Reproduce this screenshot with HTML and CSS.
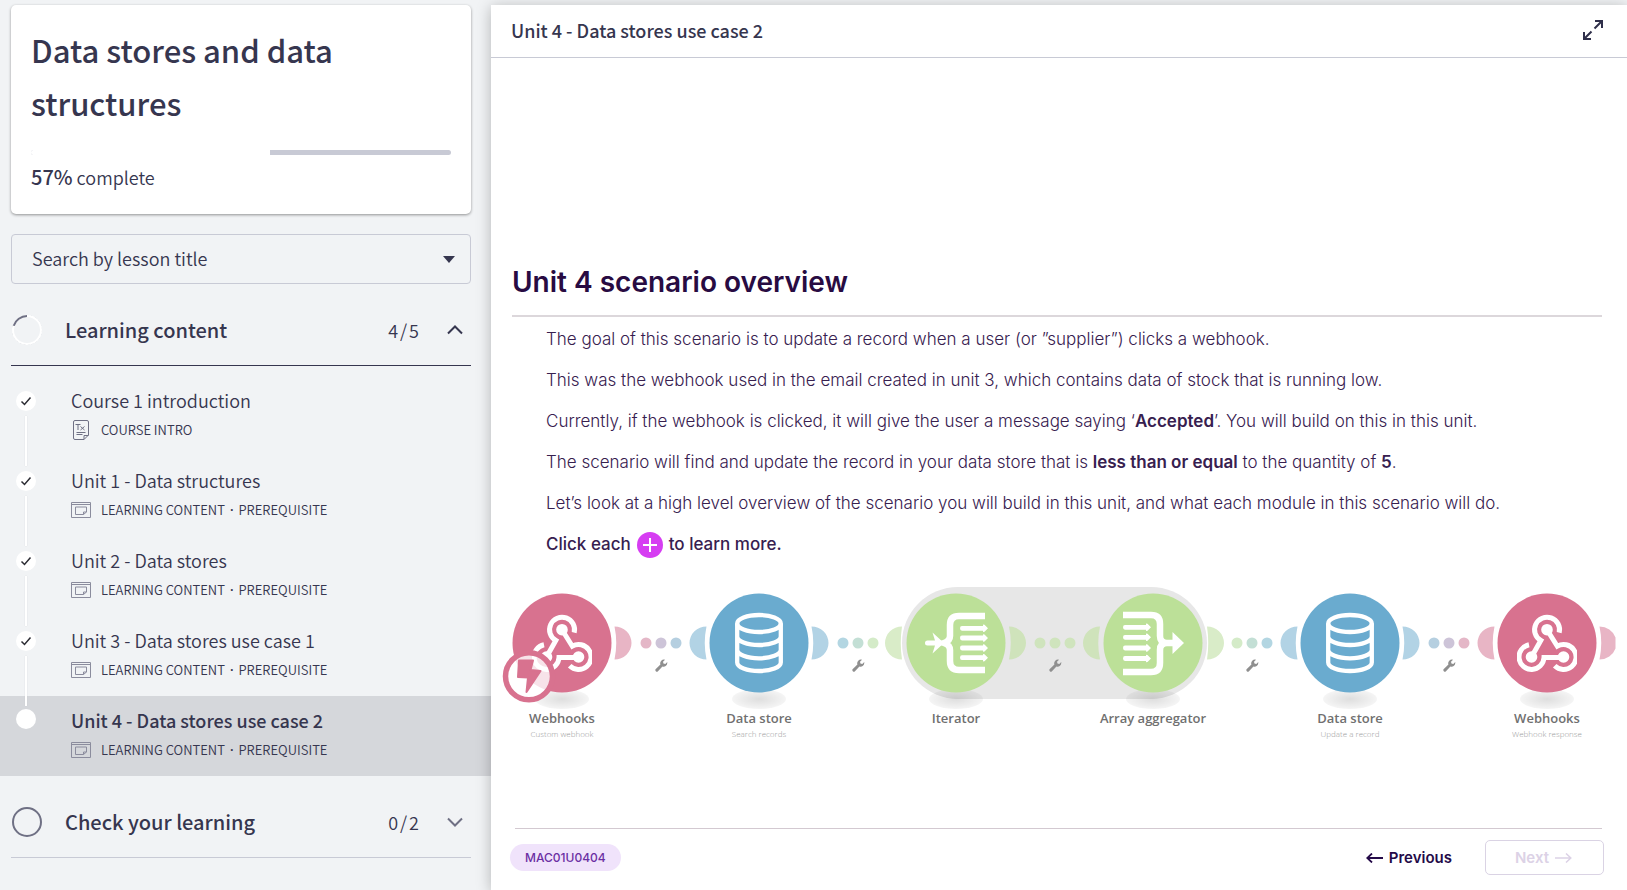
FILE: index.html
```html
<!DOCTYPE html>
<html lang="en">
<head>
<meta charset="utf-8">
<meta name="viewport" content="width=device-width, initial-scale=1">
<title>Data stores and data structures</title>
<link rel="stylesheet" href="styles.css">
</head>
<body>
<svg class="defs" aria-hidden="true">
  <defs>
    <radialGradient id="shade"><stop offset="0" stop-color="#000" stop-opacity=".13"/><stop offset="1" stop-color="#000" stop-opacity=".04"/></radialGradient>
    <symbol id="check" viewBox="0 0 20 20"><circle cx="10" cy="10" r="10" fill="#fff"/><path d="M5.500 10.500l3 3 6-7" fill="none" stroke="#2b2b33" stroke-width="1.500"/></symbol>
    <symbol id="lesson" viewBox="0 0 20 16"><g fill="none" stroke="#8b8c9d"><path d="M.5.500h19v15H.5zM.5 2.500h19"/><path d="M4.500 5h11v5l-3 2.500h-8zM12.500 12.500V10h3"/></g></symbol>
    <symbol id="webhook" viewBox="-30 -30 60 60"><g fill="none" stroke="#fff" stroke-width="5"><path d="M-15.500 14L-6.200-2.500A12.500 12.500 0 1 1 12.200-10.300"/><path d="M16.500 14.500H-3A12.500 12.500 0 1 1-18 1.700"/><path d="M0-13.300L10.300 3.200A12.500 12.500 0 1 1 7.700 22.800"/></g><g fill="#fff"><circle cy="-13.300" r="5.800"/><circle cx="-15.500" cy="14" r="5.800"/><circle cx="16.500" cy="14" r="5.800"/></g></symbol>
    <symbol id="database" viewBox="-30 -32 60 64"><g fill="none" stroke="#fff" stroke-width="4.300"><ellipse cy="-19.500" rx="21.800" ry="8.500"/><path d="M-21.800-19.500V19.500A21.800 8.500 0 0 0 21.800 19.500V-19.500M-21.800-6.500A21.800 8.500 0 0 0 21.800-6.500M-21.800 6.800A21.800 8.500 0 0 0 21.800 6.800"/></g></symbol>
    <symbol id="arrow" viewBox="0 0 28 10"><path d="M2 2.600H23V1.200L24.500 1.500 28 5 24.500 8.500 23 8.800V7.400H2Q0 7.400 0 5T2 2.600z" fill="#fff"/></symbol>
    <symbol id="wrench" viewBox="0 0 24 24"><path fill="#8f8f8f" d="M22.700 7.500a7 7 0 0 1-9 6.500L5.500 22.500a2.800 2.800 0 0 1-4-4L10 10.300a7 7 0 0 1 8.500-9L14.800 5l.8 3.400 3.400.8 3.600-3.700z"/></symbol>
  </defs>
</svg>
<div class="app">
  <aside class="sidebar">
    <section class="card">
      <h1>Data stores and data structures</h1>
      <div class="bar" role="progressbar" aria-label="Course progress" aria-valuenow="57" aria-valuemin="0" aria-valuemax="100"><div class="bar-done" style="width:57%"></div></div>
      <p class="percent"><strong>57%</strong> complete</p>
    </section>
    <div class="search">
      <select aria-label="Search by lesson title"><option>Search by lesson title</option></select>
      <svg class="caret" viewBox="0 0 12 7" aria-hidden="true"><path d="M0 0h12L6 7z" fill="#36364f"/></svg>
    </div>
    <nav aria-label="Lessons">
      <button class="section open" aria-expanded="true">
        <svg class="ring" viewBox="0 0 30 30" aria-hidden="true"><circle cx="15" cy="15" r="14.500" fill="none" stroke="#c9cad3" stroke-dasharray="2 2"/><circle cx="15" cy="15" r="14" fill="none" stroke="#fff" stroke-width="2"/><path d="M1.700 10.700A14 14 0 0 1 15 1" fill="none" stroke="#6f7084" stroke-width="2"/></svg>
        <span class="section-name">Learning content</span>
        <span class="count"><span>4</span><span>/</span><span>5</span></span>
        <svg class="chevron" viewBox="0 0 16 10" aria-hidden="true"><path d="M1 8.500l7-7 7 7" fill="none" stroke="#36364f" stroke-width="2"/></svg>
      </button>
      <ul class="lessons">
        <li><a class="lesson" href="#l0"><span class="track"><svg class="dot"><use href="#check"/></svg><i class="line"></i></span><span class="info"><span class="name">Course 1 introduction</span><span class="meta"><svg class="kind" viewBox="0 0 20 20"><g fill="none" stroke="#6f7084"><path d="M4 .5h12q1.500 0 1.500 1.500v13l-4.500 4.500H4q-1.500 0-1.500-1.500V2Q2.500.5 4 .5zM13 19.500V15.500h4.500M5.500 12.500h9M5.500 14.500h6"/><path d="M4.500 4.500h5M7 4.500V10M9.500 6.500l4 3.500M13.500 6.500l-4 3.500"/></g></svg><span>COURSE INTRO</span></span></span></a></li>
        <li><a class="lesson" href="#l1"><span class="track"><svg class="dot"><use href="#check"/></svg><i class="line"></i></span><span class="info"><span class="name">Unit 1 - Data structures</span><span class="meta"><svg class="kind"><use href="#lesson"/></svg><span>LEARNING CONTENT</span><b>·</b><span>PREREQUISITE</span></span></span></a></li>
        <li><a class="lesson" href="#l2"><span class="track"><svg class="dot"><use href="#check"/></svg><i class="line"></i></span><span class="info"><span class="name">Unit 2 - Data stores</span><span class="meta"><svg class="kind"><use href="#lesson"/></svg><span>LEARNING CONTENT</span><b>·</b><span>PREREQUISITE</span></span></span></a></li>
        <li><a class="lesson" href="#l3"><span class="track"><svg class="dot"><use href="#check"/></svg><i class="line"></i></span><span class="info"><span class="name">Unit 3 - Data stores use case 1</span><span class="meta"><svg class="kind"><use href="#lesson"/></svg><span>LEARNING CONTENT</span><b>·</b><span>PREREQUISITE</span></span></span></a></li>
        <li><a class="lesson current" href="#l4" aria-current="page"><span class="track"><i class="dot empty"></i></span><span class="info"><span class="name">Unit 4 - Data stores use case 2</span><span class="meta"><svg class="kind"><use href="#lesson"/></svg><span>LEARNING CONTENT</span><b>·</b><span>PREREQUISITE</span></span></span></a></li>
      </ul>
      <button class="section" aria-expanded="false">
        <svg class="ring" viewBox="0 0 30 30" aria-hidden="true"><circle cx="15" cy="15" r="14" fill="none" stroke="#6f7084" stroke-width="2"/></svg>
        <span class="section-name">Check your learning</span>
        <span class="count"><span>0</span><span>/</span><span>2</span></span>
        <svg class="chevron" viewBox="0 0 16 10" aria-hidden="true"><path d="M1 1.500l7 7 7-7" fill="none" stroke="#6f7084" stroke-width="2"/></svg>
      </button>
    </nav>
  </aside>
  <main class="main">
    <header class="topbar">
      <h2>Unit 4 - Data stores use case 2</h2>
      <button class="expand" aria-label="Full screen"><svg viewBox="0 0 20 20"><g fill="none" stroke="#2f2f4a" stroke-width="2"><path d="M12 1h7v7M19 1l-7.500 7.500M8 19H1v-7M1 19l7.500-7.500"/></g></svg></button>
    </header>
    <article class="stage">
      <h3>Unit 4 scenario overview</h3>
      <div class="copy">
        <p>The goal of this scenario is to update a record when a user (or ”supplier”) clicks a webhook.</p>
        <p>This was the webhook used in the email created in unit 3, which contains data of stock that is running low.</p>
        <p>Currently, if the webhook is clicked, it will give the user a message saying ‘<strong>Accepted</strong>’. You will build on this in this unit.</p>
        <p>The scenario will find and update the record in your data store that is <strong>less than or equal</strong> to the quantity of <strong>5</strong>.</p>
        <p>Let’s look at a high level overview of the scenario you will build in this unit, and what each module in this scenario will do.</p>
        <p class="hint"><span>Click each</span><svg class="plus" viewBox="0 0 26 26" role="img" aria-label="plus"><circle cx="13" cy="13" r="13" fill="#d63df2"/><path d="M13 6v14M6 13h14" stroke="#fff" stroke-width="2"/></svg><span>to learn more.</span></p>
      </div>
      <div class="flow">
        <div class="module pink">
          <svg class="art" viewBox="-60 -56 120 124"><ellipse cx="0" cy="56" rx="27" ry="10" fill="url(#shade)"/><circle class="disc" r="49.500"/><path class="lobe" d="M52.500-16.500a17 16.500 0 0 1 0 33q3.500-16.500 0-33z"/><use href="#webhook" x="-30" y="-30" width="60" height="60"/><circle cx="-33" cy="33.300" r="23.500" fill="#fff" fill-opacity=".8" stroke="#d8728f" stroke-width="5.500"/><path d="M-43 17.500h14l-2.500 9.500 10 1-14 21 1.500-14.500-10-.5z" fill="#d8728f" stroke="#d8728f" stroke-width="2" stroke-linejoin="round"/></svg>
          <strong>Webhooks</strong><small>Custom webhook</small>
        </div>
        <div class="link"><svg viewBox="-38 -56 76 124"><circle cx="-15" r="5.500" fill="#e4b7c7"/><circle r="5.500" fill="#cdc4d8"/><circle cx="15" r="5.500" fill="#b5cfe0"/><use href="#wrench" x="-6" y="16" width="13" height="13"/></svg></div>
        <div class="module blue">
          <svg class="art" viewBox="-60 -56 120 124"><ellipse cx="0" cy="56" rx="27" ry="10" fill="url(#shade)"/><circle class="disc" r="49.500"/><path class="lobe" d="M52.500-16.500a17 16.500 0 0 1 0 33q3.500-16.500 0-33zM-52.500-16.500a17 16.500 0 0 0 0 33q-3.500-16.500 0-33z"/><use href="#database" x="-30" y="-32" width="60" height="64"/></svg>
          <strong>Data store</strong><small>Search records</small>
        </div>
        <div class="link"><svg viewBox="-38 -56 76 124"><circle cx="-15" r="5.500" fill="#b3d6e2"/><circle r="5.500" fill="#c3dfd5"/><circle cx="15" r="5.500" fill="#d4ebc8"/><use href="#wrench" x="-6" y="16" width="13" height="13"/></svg></div>
        <div class="group">
          <div class="module green">
            <svg class="art" viewBox="-60 -56 120 124"><ellipse cx="0" cy="56" rx="27" ry="10" fill="url(#shade)"/><path d="M-54-16.500a17 16.500 0 0 0 0 33q-2.500-16.500 0-33z" fill="#d9ecc8"/><path d="M53-16.500a17 16.500 0 0 1 0 33q3.500-16.500 0-33z" fill="#cfe3bb"/><circle class="disc" r="49.500"/><path d="M29-27H3q-9 0-9 9v11q0 5-6 7q6 2 6 7v11q0 9 9 9H29" fill="none" stroke="#fff" stroke-width="6.500"/><path d="M-28.500-2.500h7.500l-2.500-8L-12 0l-11.500 10.500 2.500-8h-7.500q-2.500 0-2.500-2.500t2.500-2.500z" fill="#fff"/><use href="#arrow" x="4" y="-19.700" width="28" height="10"/><use href="#arrow" x="4" y="-10" width="28" height="10"/><use href="#arrow" x="4" y="0" width="28" height="10"/><use href="#arrow" x="4" y="9.700" width="28" height="10"/></svg>
            <strong>Iterator</strong>
          </div>
          <div class="link"><svg viewBox="-38 -56 76 124"><g fill="#cfe4bd"><circle cx="-15" r="5.500"/><circle r="5.500"/><circle cx="15" r="5.500"/></g><use href="#wrench" x="-6" y="16" width="13" height="13"/></svg></div>
          <div class="module green">
            <svg class="art" viewBox="-60 -56 120 124"><ellipse cx="0" cy="56" rx="27" ry="10" fill="url(#shade)"/><path d="M-53-16.500a17 16.500 0 0 0 0 33q-3.500-16.500 0-33z" fill="#cfe3bb"/><path d="M54-16.500a17 16.500 0 0 1 0 33q2.500-16.500 0-33z" fill="#d9ecc8"/><circle class="disc" r="49.500"/><path d="M-30-28H-2q9 0 9 9v12q0 7 7 7h9M-30 29H-2q9 0 9-9v-13q0-7 7-7" fill="none" stroke="#fff" stroke-width="6.500"/><path d="M19.500-11L31 0 19.500 11z" fill="#fff"/><use href="#arrow" x="-30" y="-20.700" width="28" height="10"/><use href="#arrow" x="-30" y="-10.700" width="28" height="10"/><use href="#arrow" x="-30" y="0" width="28" height="10"/><use href="#arrow" x="-30" y="10.500" width="28" height="10"/></svg>
            <strong>Array aggregator</strong>
          </div>
        </div>
        <div class="link"><svg viewBox="-38 -56 76 124"><circle cx="-15" r="5.500" fill="#d4ebc8"/><circle r="5.500" fill="#c3dfd5"/><circle cx="15" r="5.500" fill="#b3d6e2"/><use href="#wrench" x="-6" y="16" width="13" height="13"/></svg></div>
        <div class="module blue">
          <svg class="art" viewBox="-60 -56 120 124"><ellipse cx="0" cy="56" rx="27" ry="10" fill="url(#shade)"/><circle class="disc" r="49.500"/><path class="lobe" d="M52.500-16.500a17 16.500 0 0 1 0 33q3.500-16.500 0-33zM-52.500-16.500a17 16.500 0 0 0 0 33q-3.500-16.500 0-33z"/><use href="#database" x="-30" y="-32" width="60" height="64"/></svg>
          <strong>Data store</strong><small>Update a record</small>
        </div>
        <div class="link"><svg viewBox="-38 -56 76 124"><circle cx="-15" r="5.500" fill="#b5cfe0"/><circle r="5.500" fill="#cdc4d8"/><circle cx="15" r="5.500" fill="#e4b7c7"/><use href="#wrench" x="-6" y="16" width="13" height="13"/></svg></div>
        <div class="module pink">
          <svg class="art" viewBox="-60 -56 120 124"><ellipse cx="0" cy="56" rx="27" ry="10" fill="url(#shade)"/><circle class="disc" r="49.500"/><path class="lobe" d="M52.500-16.500a17 16.500 0 0 1 16 11v11a17 16.500 0 0 1-16 11q3.500-16.500 0-33zM-52.500-16.500a17 16.500 0 0 0 0 33q-3.500-16.500 0-33z"/><use href="#webhook" x="-30" y="-30" width="60" height="60"/></svg>
          <strong>Webhooks</strong><small>Webhook response</small>
        </div>
      </div>
    </article>
    <footer class="footer">
      <span class="code">MAC01U0404</span>
      <div class="pager">
        <button class="prev"><svg viewBox="0 0 17 10" aria-hidden="true"><path d="M6 0.500L1.200 5 6 9.500M1.200 5H17" fill="none" stroke="#240a48" stroke-width="1.800"/></svg>Previous</button>
        <button class="next" disabled>Next<svg viewBox="0 0 17 10" aria-hidden="true"><path d="M11 .5L15.800 5 11 9.500M15.800 5H0" fill="none" stroke="#dcd2e6" stroke-width="1.500"/></svg></button>
      </div>
    </footer>
  </main>
</div>
</body>
</html>
```
FILE: styles.css
```css
*, *::before { box-sizing: border-box; }
body {
  margin: 0;
  background: #f1f3f5;
  color: #36364f;
  font: 350 18px/30px "Noto Sans CJK SC", "Noto Sans", sans-serif;
}
h1, h2, h3, p, ul { margin: 0; padding: 0; }
button { margin: 0; border: 0; background: none; color: inherit; font: inherit; cursor: pointer; }
a { color: inherit; text-decoration: none; }
svg { display: block; flex: none; }
.defs { position: absolute; width: 0; height: 0; }

.app { display: flex; min-height: 100vh; padding-top: 5px; }

/* Sidebar */
.sidebar { width: 491px; flex: none; }
.card {
  margin: 0 20px 20px 11px;
  padding: 18px 20px 22px;
  background: #fff;
  border-radius: 5px;
  box-shadow: 0 1px 3px rgba(0, 0, 0, .4);
}
.card h1 { font-size: 31px; line-height: 53px; font-weight: 500; }
.bar { height: 5px; margin: 21px 0 7px; border-radius: 3px; background: #c8cad5; overflow: hidden; }
.bar-done { height: 5px; background: #fff; }
.percent strong { font-size: 20px; font-weight: 500; }
.search { display: grid; align-items: center; margin: 0 20px 10px 11px; }
.search > * { grid-area: 1 / 1; }
.search select {
  width: 100%;
  height: 50px;
  padding: 0 20px 3px;
  border: 1px solid #c8cad5;
  border-radius: 4px;
  background: none;
  color: inherit;
  font: inherit;
  appearance: none;
}
.caret { width: 12px; height: 7px; justify-self: end; margin-right: 16px; pointer-events: none; }
.section {
  display: flex;
  align-items: center;
  width: calc(100% - 31px);
  height: 72px;
  margin-left: 11px;
  padding: 0 8px 0 1px;
  border-bottom: 1px solid #c8cad5;
  text-align: left;
}
.section.open { border-color: #36364f; }
.ring { width: 30px; height: 30px; margin-right: 23px; }
.section-name { flex: 1; font-size: 20px; font-weight: 500; }
.count { display: flex; gap: 2px; margin-right: 28px; }
.chevron { width: 16px; height: 10px; }
.lessons { list-style: none; margin: 10px 0; }
.lesson { display: flex; height: 80px; padding-top: 9px; }
.lesson.current { background: #d5d7db; }
.track { display: flex; flex-direction: column; align-items: center; gap: 5px; width: 20px; margin: 6px 35px 0 16px; }
.dot { width: 20px; height: 20px; flex: none; }
.dot.empty { margin-top: -2px; border-radius: 50%; background: #fff; }
.line { width: 2px; height: 50px; flex: none; background: #fff; box-shadow: 0 0 1px #b8bac4; z-index: 1; }
.info { display: flex; flex-direction: column; }
.current .name { font-weight: 500; }
.meta { display: flex; align-items: center; font-size: 13px; }
.kind { width: 20px; height: 20px; margin-right: 10px; }
.meta b { margin: 0 5px; font-family: "Noto Sans", sans-serif; font-weight: 600; }

/* Lesson viewer */
.main {
  display: flex;
  flex-direction: column;
  flex: 1;
  min-width: 0;
  background: #fff;
  box-shadow: 0 2px 14px rgba(0, 0, 0, .26);
  font-family: Inter, sans-serif;
  color: #37204f;
}
.topbar { display: flex; align-items: center; justify-content: space-between; height: 53px; padding: 0 24px 3px 20px; border-bottom: 1px solid #c8cad5; }
.topbar h2 { font: 500 18px/30px "Noto Sans CJK SC", "Noto Sans", sans-serif; color: #36364f; }
.expand { padding: 0; }
.expand svg { width: 20px; height: 20px; }
.stage { padding: 203px 20px 0 11px; }
.stage h3 { margin: 0 5px 0 10px; padding-bottom: 12px; border-bottom: 2px solid #dcd7db; font-size: 28px; line-height: 42px; font-weight: 600; color: #280b42; }
.copy { padding: 2px 0 0 44px; font-size: 17px; line-height: 41px; font-weight: 300; }
.copy strong { font-weight: 600; }
.hint { display: flex; align-items: center; gap: 6px; font-weight: 500; }
.plus { width: 26px; height: 26px; }

.flow, .group { display: flex; }
.flow { padding-top: 22px; }
.group { position: relative; flex: 1 1 240px; }
.group::before { content: ""; position: absolute; inset: 0 6px auto; height: 112px; border-radius: 56px; background: #e7e7e7; }
.module { position: relative; display: flex; flex-direction: column; align-items: center; width: 120px; flex: none; font-family: "Open Sans", sans-serif; }
.art { width: 120px; height: 124px; overflow: visible; }
.module strong { font-size: 13px; line-height: 14px; font-weight: 600; color: #707070; white-space: nowrap; }
.module small { font-size: 8px; line-height: 18px; color: #9a9a9a; }
.link { position: relative; display: flex; justify-content: center; flex: 1 1 0; min-width: 0; }
.link svg { width: 76px; height: 124px; }
.pink .disc { fill: #d8728f; }
.pink .lobe { fill: #e8b5c5; }
.blue .disc { fill: #6aabcf; }
.blue .lobe { fill: #b2d3e5; }
.green .disc { fill: #bce098; }

.footer { display: flex; align-items: center; justify-content: space-between; margin: auto 25px 0 24px; padding: 11px 0 15px; border-top: 1px solid #d3c9d1; }
.code { margin-left: -5px; padding: 0 15px; border-radius: 14px; background: #f0e3fb; color: #6b2fa3; font-size: 12px; line-height: 27px; font-weight: 500; }
.pager { display: flex; align-items: center; gap: 33px; margin-right: -2px; font-size: 15px; font-weight: 600; }
.pager button { display: flex; align-items: center; gap: 6px; padding: 0; }
.pager svg { width: 17px; height: 10px; }
.prev { color: #240a48; }
.pager .next { height: 35px; padding: 0 31px 0 29px; border: 1px solid #dad3e4; border-radius: 5px; color: #dcd2e6; }
```
